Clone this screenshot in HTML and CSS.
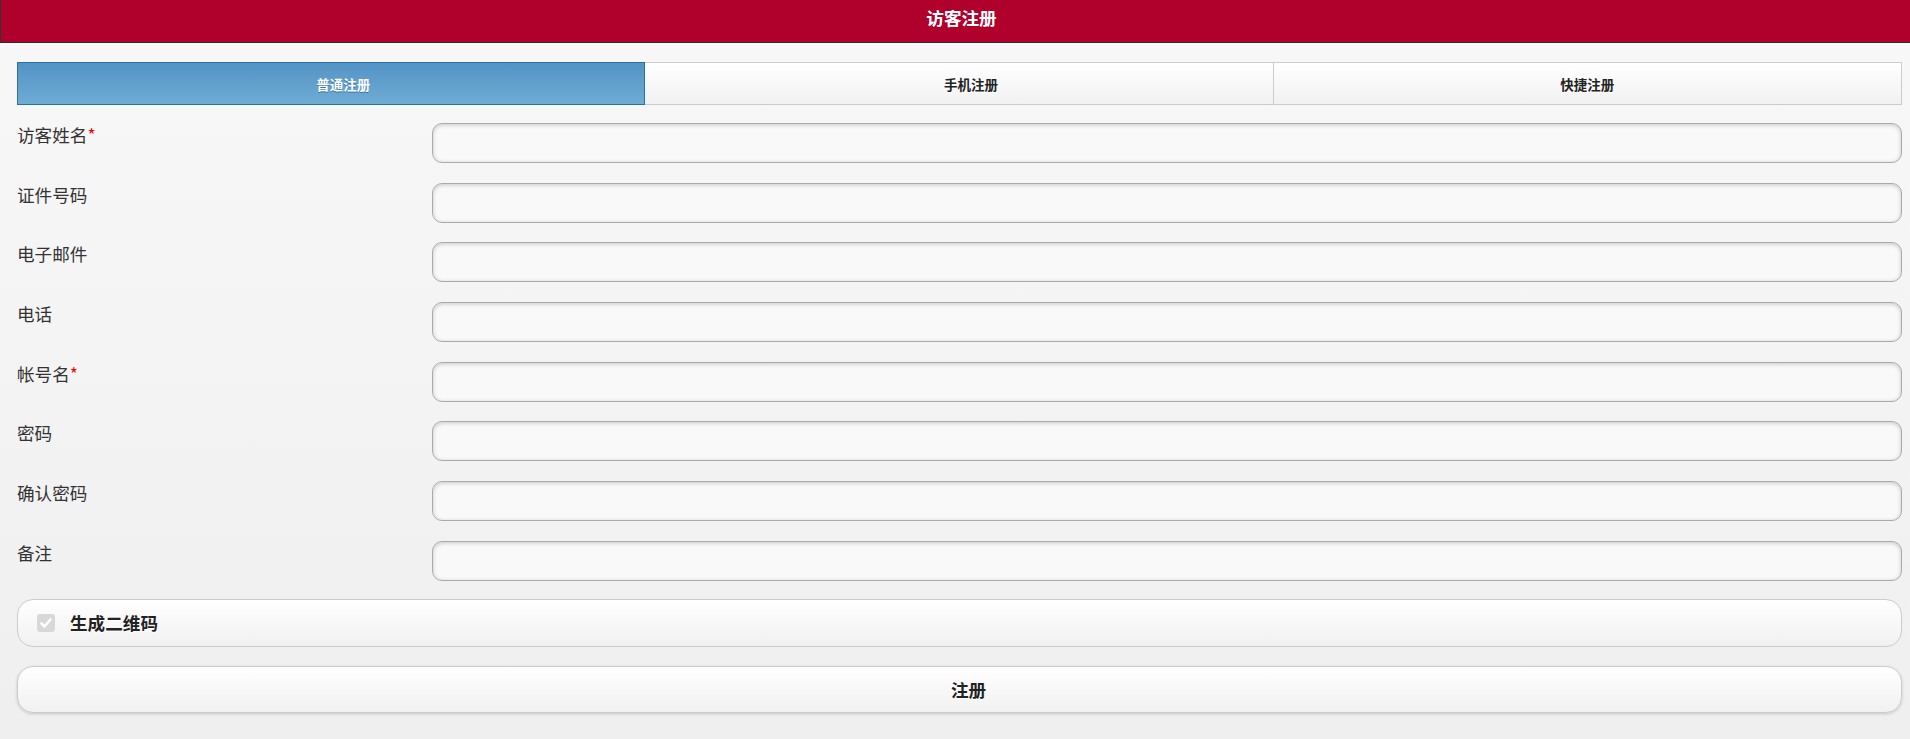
FILE: index.html
```html
<!DOCTYPE html>
<html lang="zh-CN">
<head>
<meta charset="utf-8">
<title>访客注册</title>
<link rel="stylesheet" href="styles.css">
</head>
<body>
<div class="page">
  <header class="header"><h1 class="title">访客注册</h1></header>
  <main class="content">
    <nav class="tabs">
      <a class="tab tab-active tab-shift">普通注册</a>
      <a class="tab tab-shift">手机注册</a>
      <a class="tab">快捷注册</a>
    </nav>
    <form class="form">
      <div class="rows">
        <div class="row"><label class="label">访客姓名<span class="req">*</span></label><input class="input" type="text"></div>
        <div class="row"><label class="label">证件号码</label><input class="input" type="text"></div>
        <div class="row"><label class="label">电子邮件</label><input class="input" type="text"></div>
        <div class="row"><label class="label">电话</label><input class="input" type="text"></div>
        <div class="row"><label class="label">帐号名<span class="req">*</span></label><input class="input" type="text"></div>
        <div class="row"><label class="label">密码</label><input class="input" type="password"></div>
        <div class="row"><label class="label">确认密码</label><input class="input" type="password"></div>
        <div class="row"><label class="label">备注</label><input class="input" type="text"></div>
      </div>
      <label class="check">
        <span class="check-icon"><svg width="14" height="14" viewBox="0 0 14 14"><path d="M2.5 7.5 L5.5 10.5 L11.5 3.5" fill="none" stroke="#fff" stroke-width="2.6" stroke-linecap="round" stroke-linejoin="round"/></svg></span>
        <span class="check-text">生成二维码</span>
      </label>
      <button type="button" class="btn">注册</button>
    </form>
  </main>
</div>
</body>
</html>
```
FILE: styles.css
```css
html, body {
  margin: 0;
  padding: 0;
  height: 100%;
}
body {
  font-family: "Noto Sans CJK SC", "Liberation Sans", sans-serif;
  font-size: 17.6px;
  color: #333;
  background: linear-gradient(#f8f8f8, #efefef);
  overflow: hidden;
}
.page {
  min-height: 100%;
}
.header {
  background: #b0002c;
  border-left: 1px solid #333;
  border-bottom: 1px solid #2a2a2a;
  height: 42px;
  box-sizing: content-box;
}
.title {
  margin: 0;
  padding-top: 6px;
  padding-left: 12px;
  line-height: 23px;
  font-size: 17.6px;
  font-weight: bold;
  color: #fff;
  text-align: center;
}
.content {
  padding: 19px 8px 0 17px;
}
.tabs {
  display: grid;
  grid-template-columns: repeat(3, 1fr);
  height: 43px;
}
.tab {
  display: flex;
  align-items: center;
  justify-content: center;
  font-size: 13.5px;
  font-weight: bold;
  color: #222;
  text-shadow: 0 1px 0 #fff;
  border: 1px solid #ccc;
  background: linear-gradient(#ffffff, #f1f1f1);
}
.tab-shift {
  padding-left: 24px;
}
.tab + .tab {
  border-left: none;
}
.tab-active {
  color: #fff;
  border-color: #2373a5;
  background: linear-gradient(#5393c5, #6facd5);
  text-shadow: 0 1px 0 #3373a5;
}
.form {
  padding-top: 18px;
}
.rows {
  display: flex;
  flex-direction: column;
  gap: 19.7px;
}
.row {
  display: flex;
  align-items: flex-start;
}
.label {
  flex: 0 0 22%;
  line-height: 24px;
  color: #333;
}
.req {
  color: #e00;
}
.input {
  flex: 1;
  height: 40px;
  box-sizing: border-box;
  margin: 0;
  border: 1px solid #aaa;
  border-radius: 10px;
  background: #f9f9f9;
  box-shadow: inset 0 1px 4px rgba(0, 0, 0, 0.2);
  outline: none;
  font: inherit;
}
.check {
  display: flex;
  align-items: center;
  gap: 15px;
  height: 48px;
  box-sizing: border-box;
  margin-top: 18px;
  padding-left: 19px;
  border: 1px solid #ccc;
  border-radius: 16px;
  background: linear-gradient(#ffffff, #f1f1f1);
}
.check-icon {
  display: flex;
  align-items: center;
  justify-content: center;
  width: 18px;
  height: 18px;
  border-radius: 3px;
  background: #d8d8d8;
}
.check-text {
  font-weight: bold;
  color: #222;
  text-shadow: 0 1px 0 #fff;
}
.btn {
  display: block;
  width: 100%;
  height: 47px;
  margin-top: 19px;
  padding-left: 24px;
  border: 1px solid #ccc;
  border-radius: 16px;
  background: linear-gradient(#ffffff, #f1f1f1);
  box-shadow: 0 1px 3px rgba(0, 0, 0, 0.18);
  font-family: inherit;
  font-size: 17.6px;
  font-weight: bold;
  color: #222;
  text-shadow: 0 1px 0 #fff;
}
```
